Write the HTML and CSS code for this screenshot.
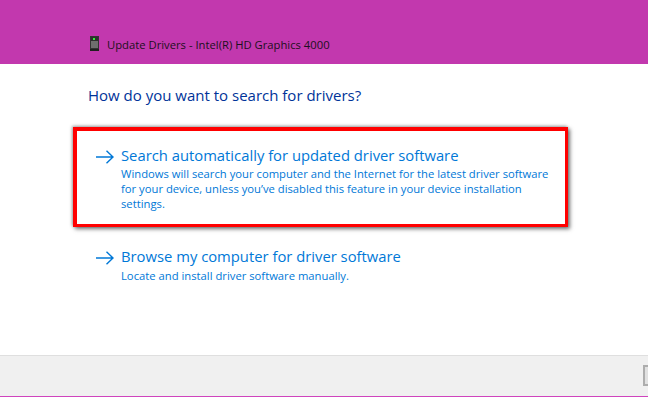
FILE: index.html
```html
<!DOCTYPE html>
<html lang="en">
<head>
<meta charset="utf-8">
<title>Update Drivers</title>
<link rel="stylesheet" href="styles.css">
</head>
<body>
<div class="window">
  <header class="titlebar">
    <svg class="device-icon" width="9" height="15" viewBox="0 0 9 15" aria-hidden="true">
      <rect x="0" y="0" width="9" height="13" fill="#333"/>
      <rect x="1" y="1" width="7" height="11" fill="#6e6e6e"/>
      <rect x="1" y="1" width="7" height="4" fill="#2e2e2e"/>
      <rect x="3" y="2" width="2" height="2" fill="#35f03a"/>
      <rect x="0" y="13" width="9" height="2" fill="#1f1f1f"/>
    </svg>
    <span class="title">Update Drivers - Intel(R) HD Graphics 4000</span>
  </header>
  <main class="content">
    <h1 class="heading">How do you want to search for drivers?</h1>
    <section class="option option-highlight">
      <svg class="arrow" width="18" height="14" viewBox="0 0 18 14" aria-hidden="true"><path d="M0 7H17M10.500 .7L17 7l-6.500 6.300" fill="none" stroke="#0078d7" stroke-width="1.400"/></svg>
      <div class="option-text">
        <div class="option-title">Search automatically for updated driver software</div>
        <p class="option-desc">Windows will search your computer and the Internet for the latest driver software<br>for your device, unless you’ve disabled this feature in your device installation<br>settings.</p>
      </div>
    </section>
    <section class="option option-plain">
      <svg class="arrow" width="18" height="14" viewBox="0 0 18 14" aria-hidden="true"><path d="M0 7H17M10.500 .7L17 7l-6.500 6.300" fill="none" stroke="#0078d7" stroke-width="1.400"/></svg>
      <div class="option-text">
        <div class="option-title">Browse my computer for driver software</div>
        <p class="option-desc option-desc-single">Locate and install driver software manually.</p>
      </div>
    </section>
  </main>
  <footer class="footer"><span class="button"></span></footer>
</div>
</body>
</html>
```
FILE: styles.css
```css
html, body { margin: 0; padding: 0; background: #fff; }
body { width: 648px; height: 400px; overflow: hidden; font-family: "Open Sans", "Noto Sans", sans-serif; }
.window { display: flex; flex-direction: column; height: 397px; }
.titlebar { height: 64px; flex: none; box-sizing: border-box; background: #c238ae; display: flex; align-items: center; gap: 8px; padding: 24px 0 0 90px; }
.device-icon { flex: none; margin-top: -1px; }
.title { font-size: 11.250px; color: #1c1020; }
.content { flex: 1; display: flex; flex-direction: column; align-items: flex-start; padding: 20px 0 0 73px; }
.heading { margin: 0 0 21px 15px; font-size: 15px; font-weight: 400; line-height: 22px; color: #003399; }
.option { display: flex; box-sizing: border-box; width: 495px; }
.option-highlight { height: 100px; border: 3px solid #f00; border-left-width: 4px; border-top-width: 4px; box-shadow: 2px 2px 4px rgba(0,0,0,.55), -1px -1px 3px rgba(0,0,0,.35); padding: 14px 0 0 19px; }
.option-plain { padding: 19px 0 0 23px; }
.arrow { flex: none; margin: 5px 7px 0 0; }
.option-title { font-size: 14.800px; line-height: 21px; color: #0078d7; }
.option-desc { margin: 0; font-size: 11.250px; line-height: 15px; color: #0078d7; white-space: nowrap; }
.option-desc-single { margin-top: 1px; }
.footer { height: 42px; flex: none; box-sizing: border-box; background: #f0f0f0; border-top: 1px solid #dfdfdf; border-bottom: 1px solid #cf44bd; display: flex; justify-content: flex-end; padding-top: 9px; }
.button { width: 5px; height: 21px; box-sizing: border-box; background: #e1e1e1; border: 2px solid #adadad; border-right: 0; }
```
